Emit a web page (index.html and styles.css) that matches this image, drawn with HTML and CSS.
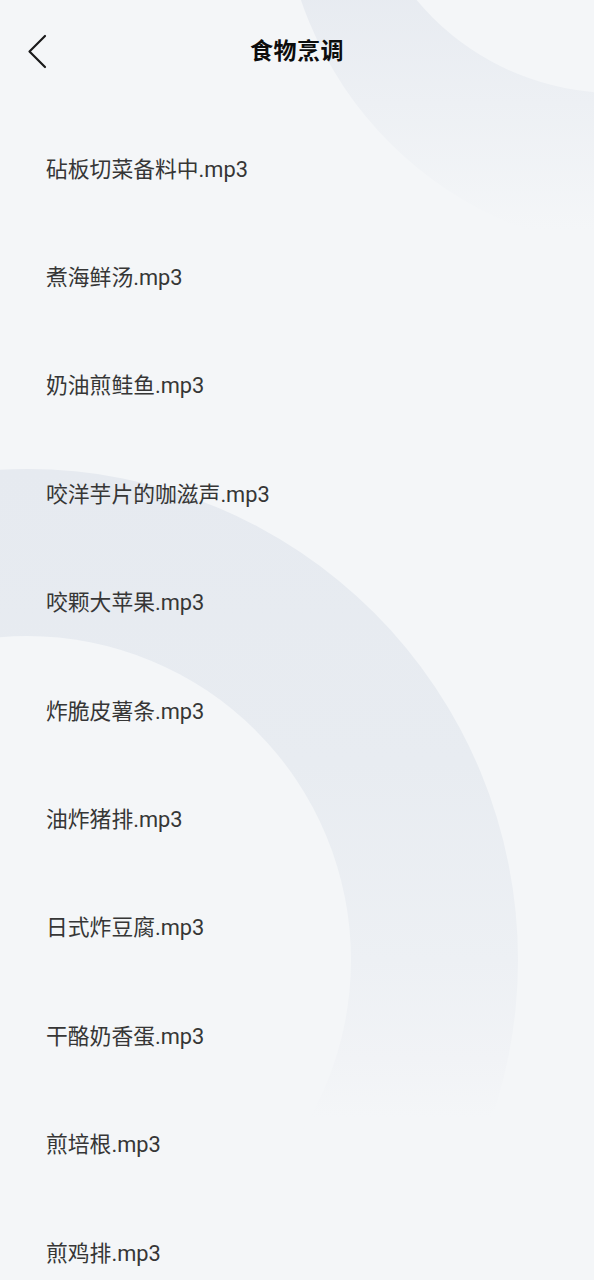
FILE: index.html
```html
<!DOCTYPE html>
<html lang="zh">
<head>
<meta charset="utf-8">
<title>食物烹调</title>
<link rel="stylesheet" href="styles.css">
</head>
<body>
<div class="screen">
  <div class="deco deco-tr-outer"></div>
  <div class="deco deco-tr-inner"></div>
  <div class="deco deco-big-outer"></div>
  <div class="deco deco-big-inner"></div>

  <header class="topbar">
    <button class="back" aria-label="返回">
      <svg width="30" height="40" viewBox="0 0 30 40">
        <path d="M22 6 L6.5 21.5 L22 37" fill="none" stroke="#1a1a1a" stroke-width="2.2" stroke-linecap="round" stroke-linejoin="round"/>
      </svg>
    </button>
    <h1 class="title">食物烹调</h1>
  </header>

  <ul class="list">
    <li class="item">砧板切菜备料中.mp3</li>
    <li class="item">煮海鲜汤.mp3</li>
    <li class="item">奶油煎鲑鱼.mp3</li>
    <li class="item">咬洋芋片的咖滋声.mp3</li>
    <li class="item">咬颗大苹果.mp3</li>
    <li class="item">炸脆皮薯条.mp3</li>
    <li class="item">油炸猪排.mp3</li>
    <li class="item">日式炸豆腐.mp3</li>
    <li class="item">干酪奶香蛋.mp3</li>
    <li class="item">煎培根.mp3</li>
    <li class="item">煎鸡排.mp3</li>
  </ul>
</div>
</body>
</html>
```

FILE: styles.css
```css
html, body {
  margin: 0;
  padding: 0;
  background: #f4f6f8;
  height: 100%;
  overflow: hidden;
}

.screen {
  position: relative;
  width: 594px;
  height: 1280px;
  overflow: hidden;
  background: #f4f6f8;
  font-family: "Roboto", "Noto Sans CJK SC", "Noto Sans", sans-serif;
}

.deco {
  position: absolute;
  border-radius: 50%;
  z-index: 0;
}

.deco-tr-outer {
  left: 281px;
  top: -492px;
  width: 744px;
  height: 744px;
  background: linear-gradient(180deg, #e6eaf0 0%, #e6eaf0 62%, #edf0f4 80%, #f4f6f8 97%);
}

.deco-tr-inner {
  left: 357px;
  top: -423px;
  width: 516px;
  height: 516px;
  background: #f4f6f8;
}

.deco-big-outer {
  left: -464px;
  top: 469px;
  width: 982px;
  height: 982px;
  background: linear-gradient(180deg, #e6eaf0 0%, #e8ecf1 30%, #edf0f4 50%, #f1f3f6 60%, #f4f6f8 66%);
}

.deco-big-inner {
  left: -297px;
  top: 636px;
  width: 648px;
  height: 648px;
  background: #f4f6f8;
}

.topbar {
  position: relative;
  z-index: 1;
  height: 98px;
  display: flex;
  align-items: center;
  justify-content: center;
}

.back {
  position: absolute;
  left: 23px;
  top: 30px;
  padding: 0;
  margin: 0;
  border: 0;
  background: none;
  width: 30px;
  height: 40px;
  display: flex;
}

.title {
  margin: 0;
  font-size: 23px;
  font-weight: 700;
  color: #0d0d0d;
  letter-spacing: 0.5px;
  font-family: "Noto Sans CJK SC", sans-serif;
}

.list {
  position: relative;
  z-index: 1;
  list-style: none;
  margin: 0;
  padding: 15px 0 0 0;
}

.item {
  height: 108.4px;
  display: flex;
  align-items: center;
  padding-left: 46px;
  font-size: 21.8px;
  color: #363636;
}
```
